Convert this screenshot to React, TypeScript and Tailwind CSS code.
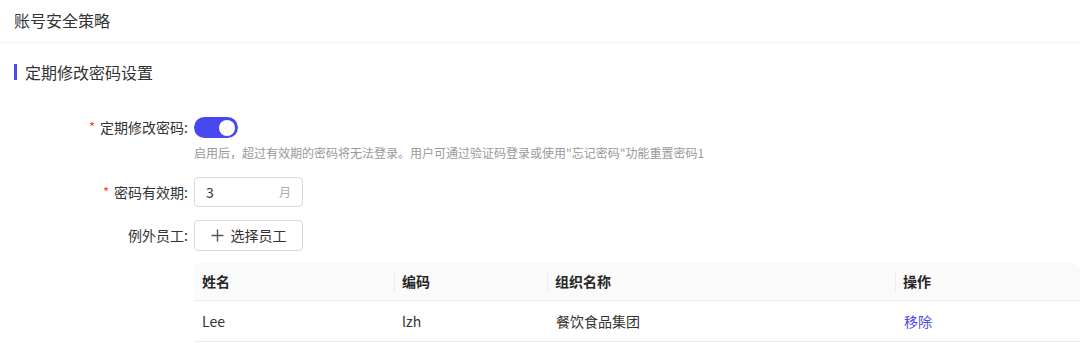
import React, { useState } from 'react';

const font = { fontFamily: '"Noto Sans CJK SC", "Noto Sans", sans-serif' };

interface Employee {
  name: string;
  code: string;
  org: string;
}

const employees: Employee[] = [{ name: 'Lee', code: 'lzh', org: '餐饮食品集团' }];

const FormRow: React.FC<{ label: string; required?: boolean; children: React.ReactNode }> = ({ label, required, children }) => (
  <div className="flex">
    <div className="w-[188px] shrink-0 flex justify-end items-center h-[30px] text-[14px] text-[#333]">
      {required && <span className="text-[#f5483b] mr-[5px] text-[13px]">*</span>}
      {label}:
    </div>
    <div className="ml-[6px] flex-1">{children}</div>
  </div>
);

export default function App() {
  const [enabled, setEnabled] = useState(true);

  return (
    <div className="w-[1080px] h-[343px] bg-white overflow-hidden" style={font}>
      <div className="h-[43px] flex items-center px-[14px] pb-[2px] text-[16px] text-[#333] border-b border-[#f0f0f0]">
        账号安全策略
      </div>
      <div className="pl-[14px] flex items-center h-[58px]">
        <div className="w-[3px] h-[16px] bg-[#4a4af4]" />
        <div className="ml-[8px] text-[16px] text-[#333]">定期修改密码设置</div>
      </div>

      <div className="mt-[11px] flex flex-col">
        <FormRow label="定期修改密码" required>
          <button
            onClick={() => setEnabled(!enabled)}
            className={`mt-[5px] w-[44px] h-[21px] rounded-full flex items-center px-[3px] ${enabled ? 'bg-[#4848f0] justify-end' : 'bg-[#ccc] justify-start'}`}
          >
            <span className="w-[16px] h-[16px] rounded-full bg-white" />
          </button>
        </FormRow>
        <div className="ml-[194px] mt-[2px] text-[12px] leading-[18px] text-[#999]">
          启用后，超过有效期的密码将无法登录。用户可通过验证码登录或使用"忘记密码"功能重置密码1
        </div>

        <div className="mt-[15px]">
          <FormRow label="密码有效期" required>
            <div className="w-[109px] h-[30px] border border-[#d9d9d9] rounded-[4px] flex items-center justify-between pl-[11px] pr-[11px] text-[14px] text-[#333]">
              <span>3</span>
              <span className="text-[12px] text-[#aaa]">月</span>
            </div>
          </FormRow>
        </div>

        <div className="mt-[13px]">
          <FormRow label="例外员工">
            <button className="w-[109px] h-[31px] border border-[#d9d9d9] rounded-[4px] flex items-center justify-center gap-[7px] text-[14px] text-[#333]">
              <svg width="13" height="13" viewBox="0 0 13 13" fill="none" stroke="#555" strokeWidth="1.4">
                <path d="M6.5 0.5v12M0.5 6.5h12" />
              </svg>
              选择员工
            </button>
          </FormRow>
        </div>

        <div className="ml-[194px] mt-[12px] w-[886px]">
          <div className="flex h-[38px] bg-[#fafafa] rounded-t-[8px] border-b border-[#ebebeb] text-[14px] font-bold text-[#262626]">
            {[
              ['姓名', 'w-[200px]'],
              ['编码', 'w-[153px]'],
              ['组织名称', 'w-[348px]'],
              ['操作', 'flex-1'],
            ].map(([t, w], i) => (
              <div key={t} className={`${w} relative flex items-center px-[8px]`}>
                {i > 0 && <span className="absolute left-0 top-[9px] w-px h-[20px] bg-[#ececec]" />}
                {t}
              </div>
            ))}
          </div>
          {employees.map((e) => (
            <div key={e.code} className="flex h-[41px] border-b border-[#ebebeb] text-[14px] text-[#333]">
              <div className="w-[200px] flex items-center px-[8px]">{e.name}</div>
              <div className="w-[153px] flex items-center px-[8px]">{e.code}</div>
              <div className="w-[348px] flex items-center px-[9px]">{e.org}</div>
              <div className="flex-1 flex items-center px-[9px] text-[#4a4af0] cursor-pointer">移除</div>
            </div>
          ))}
        </div>
      </div>
    </div>
  );
}
